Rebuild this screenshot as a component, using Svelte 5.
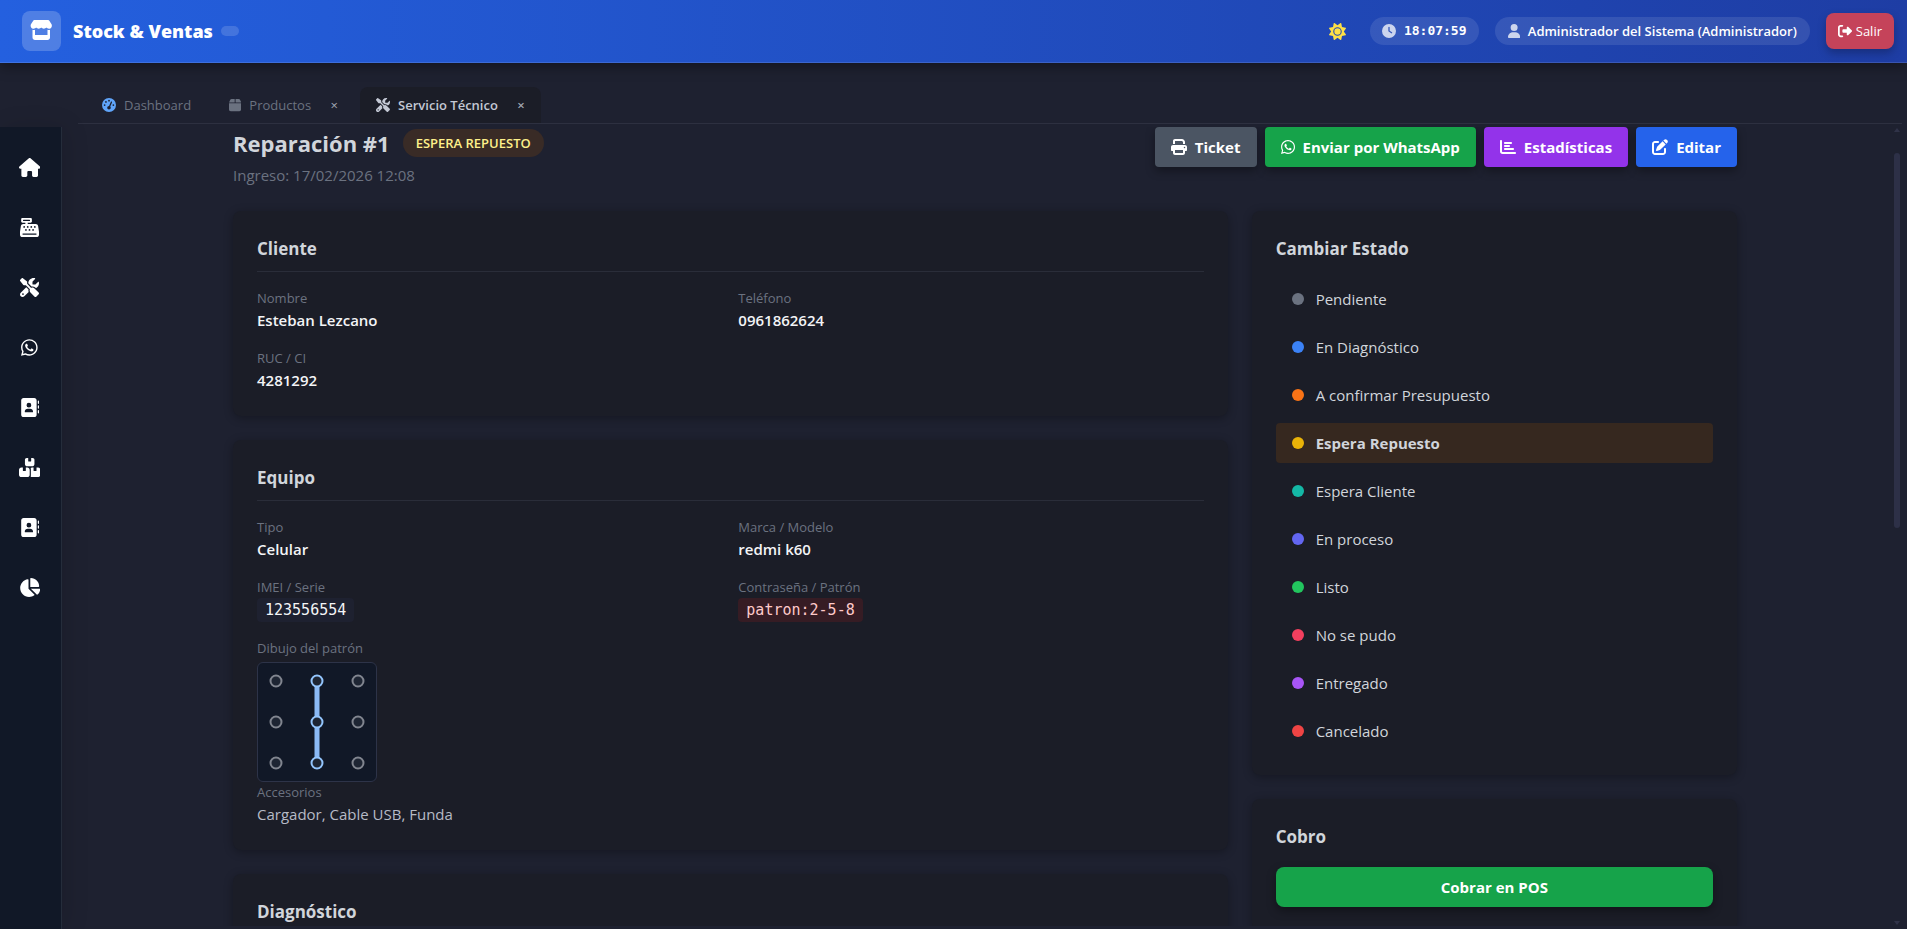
<script lang="ts">
  type Icon = { w: number; d: string }

  const icons: Record<string, Icon> = {
    store: { w: 576, d: 'M547.6 103.8L490.3 13.1C485.2 5 476.1 0 466.4 0H109.6C99.9 0 90.8 5 85.7 13.1L28.3 103.8c-29.6 46.8-3.4 111.9 51.9 119.4c4 .5 8.1 .8 12.1 .8c26.1 0 49.3-11.4 65.2-29c15.9 17.6 39.1 29 65.2 29c26.1 0 49.3-11.4 65.2-29c15.9 17.6 39.1 29 65.2 29c26.2 0 49.3-11.4 65.2-29c16 17.6 39.1 29 65.2 29c4.1 0 8.1-.3 12.1-.8c55.5-7.4 81.8-72.5 52.1-119.4zM499.7 254.9l-.1 0c-5.3 .7-10.7 1.1-16.2 1.1c-12.4 0-24.3-1.9-35.4-5.3V384H128V250.6c-11.2 3.5-23.2 5.4-35.6 5.4c-5.5 0-11-.4-16.3-1.1l-.1 0c-4.1-.6-8.1-1.3-12-2.3V384v64c0 35.3 28.7 64 64 64H448c35.3 0 64-28.7 64-64V384 252.6c-4 1-8 1.8-12.3 2.3z' },
    house: { w: 576, d: 'M575.8 255.5c0 18-15 32.1-32 32.1h-32l.7 160.2c0 2.7-.2 5.4-.5 8.1V472c0 22.1-17.9 40-40 40H456c-1.1 0-2.2 0-3.3-.1c-1.4 .1-2.8 .1-4.2 .1H416 392c-22.1 0-40-17.9-40-40V448 384c0-17.7-14.3-32-32-32H256c-17.7 0-32 14.3-32 32v64 24c0 22.1-17.9 40-40 40H160 128.1c-1.5 0-3-.1-4.5-.2c-1.2 .1-2.4 .2-3.6 .2H104c-22.1 0-40-17.9-40-40V360c0-.9 0-1.9 .1-2.8V287.6H32c-18 0-32-14-32-32.1c0-9 3-17 10-24L266.4 8c7-7 15-8 22-8s15 2 21 7L564.8 231.5c8 7 12 15 11 24z' },
    register: { w: 512, d: 'M64 0C46.3 0 32 14.3 32 32V96c0 17.7 14.3 32 32 32h80v32H87c-31.6 0-58.5 23.1-63.3 54.4L1.1 364.1C.4 368.8 0 373.6 0 378.4V448c0 35.3 28.7 64 64 64H448c35.3 0 64-28.7 64-64V378.4c0-4.8-.4-9.6-1.1-14.4L488.2 214.4C483.5 183.1 456.6 160 425 160H208V128h80c17.7 0 32-14.3 32-32V32c0-17.7-14.3-32-32-32H64zM96 48H256c8.8 0 16 7.2 16 16s-7.2 16-16 16H96c-8.8 0-16-7.2-16-16s7.2-16 16-16zM64 432c0-8.8 7.2-16 16-16H432c8.8 0 16 7.2 16 16s-7.2 16-16 16H80c-8.8 0-16-7.2-16-16zm48-168a24 24 0 1 1 0-48 24 24 0 1 1 0 48zm120-24a24 24 0 1 1 -48 0 24 24 0 1 1 48 0zM160 344a24 24 0 1 1 0-48 24 24 0 1 1 0 48zM328 240a24 24 0 1 1 -48 0 24 24 0 1 1 48 0zM256 344a24 24 0 1 1 0-48 24 24 0 1 1 0 48zM424 240a24 24 0 1 1 -48 0 24 24 0 1 1 48 0zM352 344a24 24 0 1 1 0-48 24 24 0 1 1 0 48z' },
    tools: { w: 512, d: 'M78.6 5C69.1-2.4 55.6-1.5 47 7L7 47c-8.5 8.5-9.4 22-2.1 31.6l80 104c4.5 5.9 11.6 9.4 19 9.4h54.1l109 109c-14.7 29-10 65.4 14.3 89.6l112 112c12.5 12.5 32.8 12.5 45.3 0l64-64c12.5-12.5 12.5-32.8 0-45.3l-112-112c-24.2-24.2-60.6-29-89.6-14.3l-109-109V104c0-7.5-3.5-14.5-9.4-19L78.6 5zM19.9 396.1C7.2 408.8 0 426.1 0 444.1C0 481.6 30.4 512 67.9 512c18 0 35.3-7.2 48-19.9L233.7 374.3c-7.8-20.9-9-43.6-3.6-65.1l-61.7-61.7L19.9 396.1zM512 144c0-10.5-1.1-20.7-3.2-30.5c-2.4-11.2-16.1-14.1-24.2-6l-63.9 63.9c-3 3-7.1 4.7-11.3 4.7H352c-8.8 0-16-7.2-16-16V102.6c0-4.2 1.7-8.3 4.7-11.3l63.9-63.9c8.1-8.1 5.2-21.8-6-24.2C388.7 1.1 378.5 0 368 0C288.5 0 224 64.5 224 144l0 .8 85.3 85.3c36-9.1 75.8 .5 104 28.7L429 274.5c49-23 83-72.8 83-130.5zM56 432a24 24 0 1 1 48 0 24 24 0 1 1 -48 0z' },
    whatsapp: { w: 448, d: 'M380.9 97.1C339 55.1 283.2 32 223.9 32c-122.4 0-222 99.6-222 222 0 39.1 10.2 77.3 29.6 111L0 480l117.7-30.9c32.4 17.7 68.9 27 106.1 27h.1c122.3 0 224.1-99.6 224.1-222 0-59.3-25.2-115-67.1-157zm-157 341.6c-33.2 0-65.7-8.9-94-25.7l-6.7-4-69.8 18.3L72 359.2l-4.4-7c-18.5-29.4-28.2-63.3-28.2-98.2 0-101.7 82.8-184.5 184.6-184.5 49.3 0 95.6 19.2 130.4 54.1 34.8 34.9 56.2 81.2 56.1 130.5 0 101.8-84.9 184.6-186.6 184.6zm101.2-138.2c-5.5-2.8-32.8-16.2-37.9-18-5.1-1.9-8.8-2.8-12.5 2.8-3.7 5.6-14.3 18-17.6 21.8-3.2 3.7-6.5 4.2-12 1.4-32.6-16.3-54-29.1-75.5-66-5.7-9.8 5.7-9.1 16.3-30.3 1.8-3.7.9-6.9-.5-9.7-1.4-2.8-12.5-30.1-17.1-41.2-4.5-10.8-9.1-9.3-12.5-9.5-3.2-.2-6.9-.2-10.6-.2-3.7 0-9.7 1.4-14.8 6.9-5.1 5.6-19.4 19-19.4 46.3 0 27.3 19.9 53.7 22.6 57.4 2.8 3.7 39.1 59.7 94.8 83.8 35.2 15.2 49 16.5 66.6 13.9 10.7-1.6 32.8-13.4 37.4-26.4 4.6-13 4.6-24.1 3.2-26.4-1.3-2.5-5-3.9-10.5-6.6z' },
    book: { w: 512, d: 'M96 0C60.7 0 32 28.7 32 64V448c0 35.3 28.7 64 64 64H384c35.3 0 64-28.7 64-64V64c0-35.3-28.7-64-64-64H96zM208 288h64c44.2 0 80 35.8 80 80c0 8.8-7.2 16-16 16H144c-8.8 0-16-7.2-16-16c0-44.2 35.8-80 80-80zm-32-96a64 64 0 1 1 128 0 64 64 0 1 1 -128 0zM512 80c0-8.8-7.2-16-16-16s-16 7.2-16 16v64c0 8.8 7.2 16 16 16s16-7.2 16-16V80zM496 192c-8.8 0-16 7.2-16 16v64c0 8.8 7.2 16 16 16s16-7.2 16-16V208c0-8.8-7.2-16-16-16zm16 144c0-8.8-7.2-16-16-16s-16 7.2-16 16v64c0 8.8 7.2 16 16 16s16-7.2 16-16V336z' },
    boxes: { w: 576, d: 'M248 0H208c-26.5 0-48 21.5-48 48V160c0 35.3 28.7 64 64 64H352c35.3 0 64-28.7 64-64V48c0-26.5-21.5-48-48-48H328V80c0 8.8-7.2 16-16 16H264c-8.8 0-16-7.2-16-16V0zM64 256c-35.3 0-64 28.7-64 64V448c0 35.3 28.7 64 64 64H224c35.3 0 64-28.7 64-64V320c0-35.3-28.7-64-64-64H184v80c0 8.8-7.2 16-16 16H120c-8.8 0-16-7.2-16-16V256H64zM352 512H512c35.3 0 64-28.7 64-64V320c0-35.3-28.7-64-64-64H472v80c0 8.8-7.2 16-16 16H408c-8.8 0-16-7.2-16-16V256H352c-15 0-28.8 5.1-39.7 13.8c4.9 10.4 7.7 22 7.7 34.2V464c0 12.2-2.8 23.8-7.7 34.2C323.2 506.9 337 512 352 512z' },
    pie: { w: 576, d: 'M304 240V16.6c0-9 7-16.6 16-16.6C443.7 0 544 100.3 544 224c0 9-7.6 16-16.6 16H304zM32 272C32 150.7 122.1 50.3 239 34.3c9.2-1.3 17 6.1 17 15.4V288L412.5 444.5c6.7 6.7 6.2 17.7-1.5 23.1C371.8 495.6 323.8 512 272 512C139.5 512 32 404.6 32 272zm526.4 16c9.3 0 16.6 7.8 15.4 17c-7.7 55.9-34.6 105.6-73.9 142.3c-6 5.6-15.4 5.2-21.2-.7L320 288H558.4z' },
    clock: { w: 512, d: 'M256 0a256 256 0 1 1 0 512A256 256 0 1 1 256 0zM232 120V256c0 8 4 15.5 10.7 20l96 64c11 7.4 25.9 4.4 33.3-6.7s4.4-25.9-6.7-33.3L280 243.2V120c0-13.3-10.7-24-24-24s-24 10.7-24 24z' },
    user: { w: 448, d: 'M224 256A128 128 0 1 0 224 0a128 128 0 1 0 0 256zm-45.7 48C79.8 304 0 383.8 0 482.3C0 498.7 13.3 512 29.7 512H418.3c16.4 0 29.7-13.3 29.7-29.7C448 383.8 368.2 304 269.7 304H178.3z' },
    logout: { w: 512, d: 'M377.9 105.9L500.7 228.7c7.2 7.2 11.3 17.1 11.3 27.3s-4.1 20.1-11.3 27.3L377.9 406.1c-6.4 6.4-15 9.9-24 9.9c-18.7 0-33.9-15.2-33.9-33.9l0-62.1-128 0c-17.7 0-32-14.3-32-32l0-64c0-17.7 14.3-32 32-32l128 0 0-62.1c0-18.7 15.2-33.9 33.9-33.9c9 0 17.6 3.6 24 9.9zM160 96L96 96c-17.7 0-32 14.3-32 32l0 256c0 17.7 14.3 32 32 32l64 0c17.7 0 32 14.3 32 32s-14.3 32-32 32l-64 0c-53 0-96-43-96-96L0 128C0 75 43 32 96 32l64 0c17.7 0 32 14.3 32 32s-14.3 32-32 32z' },
    print: { w: 512, d: 'M128 0C92.7 0 64 28.7 64 64v96h64V64H354.7L384 93.3V160h64V93.3c0-17-6.7-33.3-18.7-45.3L400 18.7C388 6.7 371.7 0 354.7 0H128zM384 352v32 64H128V384 368 352H384zm64 32h32c17.7 0 32-14.3 32-32V256c0-35.3-28.7-64-64-64H64c-35.3 0-64 28.7-64 64v96c0 17.7 14.3 32 32 32H64v64c0 35.3 28.7 64 64 64H384c35.3 0 64-28.7 64-64V384zM432 248a24 24 0 1 1 0 48 24 24 0 1 1 0-48z' },
    bars: { w: 512, d: 'M32 32c17.7 0 32 14.3 32 32V400c0 8.8 7.2 16 16 16H480c17.7 0 32 14.3 32 32s-14.3 32-32 32H80c-44.2 0-80-35.8-80-80V64C0 46.3 14.3 32 32 32zm96 96c0-17.7 14.3-32 32-32l192 0c17.7 0 32 14.3 32 32s-14.3 32-32 32H160c-17.7 0-32-14.3-32-32zm32 64H288c17.7 0 32 14.3 32 32s-14.3 32-32 32H160c-17.7 0-32-14.3-32-32s14.3-32 32-32zm0 96H416c17.7 0 32 14.3 32 32s-14.3 32-32 32H160c-17.7 0-32-14.3-32-32s14.3-32 32-32z' },
    edit: { w: 512, d: 'M471.6 21.7c-21.9-21.9-57.3-21.9-79.2 0L362.3 51.7l97.9 97.9 30.1-30.1c21.9-21.9 21.9-57.3 0-79.2L471.6 21.7zm-299.2 220c-6.1 6.1-10.8 13.6-13.5 21.9l-29.6 88.8c-2.9 8.6-.6 18.1 5.8 24.6s15.9 8.7 24.6 5.8l88.8-29.6c8.2-2.7 15.7-7.4 21.9-13.5L437.7 172.3 339.7 74.3 172.4 241.7zM96 64C43 64 0 107 0 160V416c0 53 43 96 96 96H352c53 0 96-43 96-96V320c0-17.7-14.3-32-32-32s-32 14.3-32 32v96c0 17.7-14.3 32-32 32H96c-17.7 0-32-14.3-32-32V160c0-17.7 14.3-32 32-32h96c17.7 0 32-14.3 32-32s-14.3-32-32-32H96z' },
    gauge: { w: 512, d: 'M0 256a256 256 0 1 1 512 0A256 256 0 1 1 0 256zM288 96a32 32 0 1 0 -64 0 32 32 0 1 0 64 0zM256 416c35.3 0 64-28.7 64-64c0-17.4-6.9-33.1-18.1-44.6L366 161.7c5.3-12.1-.2-26.3-12.3-31.6s-26.3 .2-31.6 12.3L257.9 288c-.6 0-1.3 0-1.9 0c-35.3 0-64 28.7-64 64s28.7 64 64 64zM176 144a32 32 0 1 0 -64 0 32 32 0 1 0 64 0zM96 288a32 32 0 1 0 0-64 32 32 0 1 0 0 64zm352-32a32 32 0 1 0 -64 0 32 32 0 1 0 64 0z' },
    box: { w: 448, d: 'M50.7 58.5L0 160H208V32H93.7C75.5 32 58.9 42.3 50.7 58.5zM240 160H448L397.3 58.5C389.1 42.3 372.5 32 354.3 32H240V160zm208 32H0V416c0 35.3 28.7 64 64 64H384c35.3 0 64-28.7 64-64V192z' },
    sun: { w: 512, d: 'M361.5 1.2c5 2.1 8.6 6.6 9.6 11.9L391 121l107.9 19.8c5.3 1 9.8 4.6 11.9 9.6s1.5 10.7-1.6 15.2L446.9 256l62.3 90.3c3.1 4.5 3.7 10.2 1.6 15.2s-6.6 8.6-11.9 9.6L391 391 371.1 498.9c-1 5.3-4.6 9.8-9.6 11.9s-10.7 1.5-15.2-1.6L256 446.9l-90.3 62.3c-4.5 3.1-10.2 3.7-15.2 1.6s-8.6-6.6-9.6-11.9L121 391 13.1 371.1c-5.3-1-9.8-4.6-11.9-9.6s-1.5-10.7 1.6-15.2L65.1 256 2.8 165.7c-3.1-4.5-3.7-10.2-1.6-15.2s6.6-8.6 11.9-9.6L121 121 140.9 13.1c1-5.3 4.6-9.8 9.6-11.9s10.7-1.5 15.2 1.6L256 65.1 346.3 2.8c4.5-3.1 10.2-3.7 15.2-1.6zM160 256a96 96 0 1 1 192 0 96 96 0 1 1 -192 0zm224 0a128 128 0 1 0 -256 0 128 128 0 1 0 256 0z' }
  }

  const menu = [
    { icon: 'house', label: 'Inicio' },
    { icon: 'register', label: 'Punto de venta' },
    { icon: 'tools', label: 'Servicio técnico' },
    { icon: 'whatsapp', label: 'WhatsApp' },
    { icon: 'book', label: 'Clientes' },
    { icon: 'boxes', label: 'Inventario' },
    { icon: 'book', label: 'Proveedores' },
    { icon: 'pie', label: 'Reportes' }
  ]

  const tabs = [
    { icon: 'gauge', label: 'Dashboard', closable: false },
    { icon: 'box', label: 'Productos', closable: true },
    { icon: 'tools', label: 'Servicio Técnico', closable: true }
  ]
  let activeTab = $state('Servicio Técnico')

  const actions = [
    { icon: 'print', label: 'Ticket', tone: 'gray' },
    { icon: 'whatsapp', label: 'Enviar por WhatsApp', tone: 'green' },
    { icon: 'bars', label: 'Estadísticas', tone: 'purple' },
    { icon: 'edit', label: 'Editar', tone: 'blue' }
  ]

  const estados = [
    { label: 'Pendiente', color: '#6b7280' },
    { label: 'En Diagnóstico', color: '#3b82f6' },
    { label: 'A confirmar Presupuesto', color: '#f97316' },
    { label: 'Espera Repuesto', color: '#eab308' },
    { label: 'Espera Cliente', color: '#14b8a6' },
    { label: 'En proceso', color: '#6366f1' },
    { label: 'Listo', color: '#22c55e' },
    { label: 'No se pudo', color: '#f43f5e' },
    { label: 'Entregado', color: '#a855f7' },
    { label: 'Cancelado', color: '#ef4444' }
  ]
  let estado = $state('Espera Repuesto')

  // 3x3 unlock grid, numbered 1-9 left to right
  const patron = [2, 5, 8]
  const point = (n: number) => ({ x: 18 + ((n - 1) % 3) * 41, y: 18 + Math.floor((n - 1) / 3) * 41 })
  const trazo = patron.map((n) => `${point(n).x},${point(n).y}`).join(' ')
</script>

{#snippet icon(name: string)}
  <svg class="icon" viewBox="0 0 {icons[name].w} 512" aria-hidden="true">
    <path d={icons[name].d} fill="currentColor" fill-rule="evenodd" />
  </svg>
{/snippet}

<div class="app">
  <header class="topbar">
    <div class="brand">
      <span class="logo">{@render icon('store')}</span>
      <span class="brand-name">Stock &amp; Ventas</span>
      <span class="brand-tag"></span>
    </div>
    <div class="session">
      <button type="button" class="theme" aria-label="Cambiar tema">{@render icon('sun')}</button>
      <span class="pill clock">{@render icon('clock')}<time>18:07:59</time></span>
      <span class="pill user">{@render icon('user')}Administrador del Sistema (Administrador)</span>
      <button type="button" class="logout">{@render icon('logout')}Salir</button>
    </div>
  </header>

  <nav class="tabs">
    {#each tabs as tab}
      <div class="tab" class:active={tab.label === activeTab}>
        <button type="button" class="tab-name" onclick={() => (activeTab = tab.label)}>
          {@render icon(tab.icon)}{tab.label}
        </button>
        {#if tab.closable}
          <button type="button" class="tab-close" aria-label="Cerrar {tab.label}">×</button>
        {/if}
      </div>
    {/each}
  </nav>

  <aside class="sidebar">
    {#each menu as item}
      <a href="#{item.icon}" aria-label={item.label}>{@render icon(item.icon)}</a>
    {/each}
  </aside>

  <div class="viewport">
    <main>
      <div class="page">
        <div class="page-head">
          <div>
            <div class="title-row">
              <h1>Reparación #1</h1>
              <span class="badge">ESPERA REPUESTO</span>
            </div>
            <p class="ingreso">Ingreso: 17/02/2026 12:08</p>
          </div>
          <div class="actions">
            {#each actions as action}
              <button type="button" class="action {action.tone}">{@render icon(action.icon)}{action.label}</button>
            {/each}
          </div>
        </div>

        <div class="columns">
          <div class="stack wide">
            <section class="card">
              <h2 class="ruled">Cliente</h2>
              <dl>
                <div><dt>Nombre</dt><dd>Esteban Lezcano</dd></div>
                <div><dt>Teléfono</dt><dd>0961862624</dd></div>
                <div><dt>RUC / CI</dt><dd>4281292</dd></div>
              </dl>
            </section>

            <section class="card">
              <h2 class="ruled">Equipo</h2>
              <dl>
                <div><dt>Tipo</dt><dd>Celular</dd></div>
                <div><dt>Marca / Modelo</dt><dd>redmi k60</dd></div>
                <div><dt>IMEI / Serie</dt><dd class="code"><code>123556554</code></dd></div>
                <div><dt>Contraseña / Patrón</dt><dd class="code"><code class="secret">patron:2-5-8</code></dd></div>
                <div class="full">
                  <dt>Dibujo del patrón</dt>
                  <dd class="pattern">
                    <svg viewBox="0 0 118 118" role="img" aria-label="Patrón 2-5-8">
                      <polyline points={trazo} />
                      {#each [1, 2, 3, 4, 5, 6, 7, 8, 9] as n}
                        <circle class:on={patron.includes(n)} cx={point(n).x} cy={point(n).y} r="5.5" />
                      {/each}
                    </svg>
                  </dd>
                  <dt>Accesorios</dt>
                  <dd class="plain">Cargador, Cable USB, Funda</dd>
                </div>
              </dl>
            </section>

            <section class="card">
              <h2 class="ruled">Diagnóstico</h2>
            </section>
          </div>

          <div class="stack">
            <section class="card">
              <h2>Cambiar Estado</h2>
              <div class="estados">
                {#each estados as item}
                  <button type="button" class:selected={item.label === estado} onclick={() => (estado = item.label)}>
                    <span class="dot" style="background: {item.color}"></span>{item.label}
                  </button>
                {/each}
              </div>
            </section>

            <section class="card">
              <h2>Cobro</h2>
              <button type="button" class="cobrar">Cobrar en POS</button>
            </section>
          </div>
        </div>
      </div>
    </main>
    <div class="track" aria-hidden="true">
      <span class="arrow up"></span>
      <span class="thumb"></span>
      <span class="arrow down"></span>
    </div>
  </div>
</div>

<style>
  :global(body) {
    margin: 0;
    background: #1e2130;
  }
  .app {
    display: grid;
    grid-template-columns: 62px minmax(0, 1fr);
    grid-template-rows: 63px 64px minmax(0, 1fr);
    height: 100vh;
    overflow: hidden;
    background: #1e2130;
    color: #d1d5db;
    font-family: 'Segoe UI', 'Open Sans', 'Noto Sans', sans-serif;
    font-size: 15px;
    line-height: 24px;
  }
  .app * {
    box-sizing: border-box;
  }
  button {
    font: inherit;
    color: inherit;
    border: none;
    background: none;
    padding: 0;
    cursor: pointer;
  }
  h1,
  h2,
  p,
  dl,
  dd {
    margin: 0;
  }
  .icon {
    height: 1em;
    width: auto;
    flex: none;
    display: block;
  }

  .topbar {
    grid-column: 1 / -1;
    display: flex;
    align-items: center;
    justify-content: space-between;
    padding: 0 13px 0 22px;
    background: linear-gradient(90deg, #2460df, #1e3da4);
    border-bottom: 1px solid rgba(255, 255, 255, 0.12);
    box-shadow: 0 4px 12px rgba(0, 0, 0, 0.35);
    color: #fff;
    z-index: 2;
  }
  .brand,
  .session {
    display: flex;
    align-items: center;
  }
  .logo {
    display: grid;
    place-items: center;
    width: 39px;
    height: 40px;
    padding-bottom: 3px;
    border-radius: 8px;
    background: rgba(255, 255, 255, 0.2);
    font-size: 20px;
  }
  .brand-name {
    margin-left: 12px;
    font-size: 18px;
    font-weight: 800;
  }
  .brand-tag {
    width: 18px;
    height: 10px;
    margin-left: 8px;
    border-radius: 8px;
    background: rgba(255, 255, 255, 0.15);
  }
  .session {
    gap: 16px;
    font-size: 13px;
  }
  .theme {
    color: #fde047;
    font-size: 17px;
    padding: 8px;
  }
  .pill {
    display: flex;
    align-items: center;
    gap: 8px;
    height: 28px;
    padding: 0 12px;
    border-radius: 14px;
    background: rgba(255, 255, 255, 0.1);
    font-weight: 600;
  }
  .user {
    padding: 0 13px;
  }
  .pill .icon {
    opacity: 0.75;
    height: 14px;
  }
  .clock time {
    font-family: 'DejaVu Sans Mono', monospace;
    font-weight: 700;
  }
  .logout {
    display: flex;
    align-items: center;
    gap: 4px;
    height: 36px;
    padding: 0 12px;
    border-radius: 8px;
    background: #c5435a;
    box-shadow: 0 4px 8px rgba(0, 0, 0, 0.25);
  }
  .logout .icon {
    height: 14px;
  }

  .tabs {
    grid-column: 2;
    display: flex;
    align-items: flex-end;
    gap: 6px;
    margin: 0 5px 3px 16px;
    padding-left: 8px;
    border-bottom: 1px solid #2d3040;
    font-size: 13px;
    color: #6b7280;
    font-weight: 500;
  }
  .tab {
    display: flex;
    align-items: center;
    height: 36px;
    padding: 0 12px 0 16px;
    border-radius: 8px 8px 0 0;
  }
  .tab:first-child {
    padding-right: 16px;
  }
  .tab-name {
    display: flex;
    align-items: center;
    gap: 8px;
  }
  .tab-name .icon {
    height: 14px;
  }
  .tab:first-child .icon {
    color: #60a5fa;
  }
  .tab.active {
    background: #1b1d27;
    color: #c3c8d4;
    font-weight: 600;
  }
  .tab-close {
    width: 16px;
    margin-left: 15px;
    color: #a3a8b4;
  }

  .sidebar {
    grid-column: 1;
    display: flex;
    flex-direction: column;
    align-items: center;
    padding: 16px 2px 0 0;
    gap: 12px;
    background: #111827;
    border-right: 1px solid #252d3b;
    box-shadow: 4px 0 24px rgba(0, 0, 0, 0.12);
    font-size: 19px;
    color: #fff;
  }
  .sidebar a {
    display: grid;
    place-items: center;
    width: 48px;
    height: 48px;
    color: inherit;
  }

  .viewport {
    display: flex;
    margin: 0 5px 3px 16px;
    min-height: 0;
    overflow: hidden;
  }
  main {
    flex: 1;
    min-width: 0;
    overflow: hidden;
  }
  .track {
    display: flex;
    flex-direction: column;
    align-items: center;
    width: 10px;
    padding: 1px 0;
  }
  .arrow {
    border: 3px solid transparent;
  }
  .arrow.up {
    border-bottom: 4px solid #303348;
    border-top: none;
  }
  .arrow.down {
    border-top: 4px solid #303348;
    border-bottom: none;
    margin-top: auto;
  }
  .thumb {
    width: 6px;
    height: 47%;
    margin-top: 21px;
    border-radius: 3px;
    background: #2d3047;
  }
  .page {
    max-width: 1536px;
    margin: 0 auto;
    padding: 0 16px;
  }
  .page-head {
    display: flex;
    justify-content: space-between;
    align-items: flex-start;
    margin-bottom: 24px;
  }
  .title-row {
    display: flex;
    align-items: center;
    gap: 13px;
    height: 32px;
  }
  h1 {
    font-size: 22px;
    font-weight: 700;
    line-height: 32px;
  }
  .badge {
    padding: 2px 13px;
    border-radius: 14px;
    background: #392b26;
    color: #fef08a;
    font-size: 13px;
    font-weight: 600;
  }
  .ingreso {
    margin-top: 4px;
    color: #6b7280;
  }
  .actions {
    display: flex;
    gap: 8px;
  }
  .action {
    display: flex;
    align-items: center;
    gap: 8px;
    height: 40px;
    padding: 0 16px;
    border-radius: 4px;
    color: #fff;
    font-weight: 700;
    box-shadow: 0 4px 10px rgba(0, 0, 0, 0.35);
  }
  .action .icon {
    height: 16px;
  }
  .gray {
    background: #4b5563;
  }
  .green {
    background: #16a34a;
  }
  .purple {
    background: #9333ea;
  }
  .blue {
    background: #2563eb;
  }

  .columns {
    display: grid;
    grid-template-columns: repeat(3, minmax(0, 1fr));
    gap: 24px;
    align-items: start;
  }
  .stack {
    display: grid;
    gap: 24px;
  }
  .wide {
    grid-column: span 2;
  }
  .card {
    padding: 24px;
    border-radius: 8px;
    background: #1b1d27;
    box-shadow: 0 2px 10px rgba(0, 0, 0, 0.3);
  }
  h2 {
    margin-bottom: 16px;
    font-size: 17px;
    font-weight: 700;
    line-height: 28px;
  }
  .ruled {
    padding-bottom: 8px;
    border-bottom: 1px solid #2a2d39;
  }
  dl {
    display: grid;
    grid-template-columns: repeat(2, minmax(0, 1fr));
    gap: 16px;
  }
  .full {
    grid-column: 1 / -1;
  }
  dt {
    color: #6b7280;
    font-size: 13px;
    line-height: 20px;
  }
  dd {
    color: #f3f4f6;
    font-weight: 600;
  }
  dd.plain {
    color: #b6bac6;
    font-weight: 400;
  }
  .code {
    display: flex;
    align-items: flex-end;
    height: 25px;
  }
  code {
    padding: 0 8px;
    border-radius: 4px;
    background: #1e2130;
    font-family: 'DejaVu Sans Mono', monospace;
    font-size: 15px;
    font-weight: 400;
  }
  .secret {
    background: #361c24;
    color: #fecaca;
  }
  .pattern svg {
    display: block;
    width: 120px;
    height: 120px;
    margin-top: 4px;
    border: 1px solid #2d3348;
    border-radius: 6px;
    background: #111827;
  }
  .pattern polyline {
    fill: none;
    stroke: #8ab9f5;
    stroke-width: 5;
  }
  .pattern circle {
    fill: #1e2533;
    stroke: #81858f;
    stroke-width: 2;
  }
  .pattern circle.on {
    stroke: #93c5fd;
  }

  .estados {
    display: grid;
    gap: 8px;
  }
  .estados button {
    display: flex;
    align-items: center;
    gap: 12px;
    height: 40px;
    padding: 0 16px;
    border-radius: 4px;
  }
  .estados .selected {
    background: #36281f;
    font-weight: 700;
  }
  .dot {
    width: 12px;
    height: 12px;
    border-radius: 50%;
  }
  .cobrar {
    width: 100%;
    height: 40px;
    border-radius: 8px;
    background: #16a34a;
    color: #fff;
    font-weight: 700;
    box-shadow: 0 4px 10px rgba(0, 0, 0, 0.35);
  }
</style>
